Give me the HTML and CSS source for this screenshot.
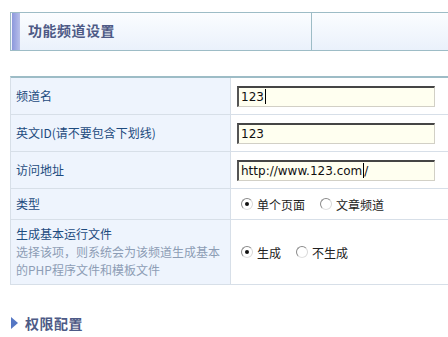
FILE: index.html
```html
<!DOCTYPE html>
<html lang="zh">
<head>
<meta charset="utf-8">
<link rel="stylesheet" href="styles.css">
</head>
<body>
<div class="page">
  <div class="titlebox">
    <div class="titlemain"><span class="accent"></span><span class="titletext">功能频道设置</span></div>
    <div class="titleside"></div>
  </div>

  <div class="form">
    <div class="lab">频道名</div>
    <div class="val"><div class="field">123<span class="caret"></span></div></div>

    <div class="lab">英文ID(请不要包含下划线)</div>
    <div class="val"><div class="field">123</div></div>

    <div class="lab">访问地址</div>
    <div class="val"><div class="field">http://www.123.com<span class="caret"></span>/</div></div>

    <div class="lab short">类型</div>
    <div class="val short">
      <span class="opt"><span class="radio on"></span>单个页面</span>
      <span class="opt"><span class="radio"></span>文章频道</span>
    </div>

    <div class="lab tall">
      <div>生成基本运行文件</div>
      <div class="desc">选择该项，则系统会为该频道生成基本的PHP程序文件和模板文件</div>
    </div>
    <div class="val tall">
      <span class="opt"><span class="radio on"></span>生成</span>
      <span class="opt"><span class="radio"></span>不生成</span>
    </div>
  </div>

  <div class="section"><span class="tri"></span><span class="sectext">权限配置</span></div>
</div>
</body>
</html>
```

FILE: styles.css
```css
html, body {
  margin: 0;
  padding: 0;
  background: #ffffff;
}
body {
  font-family: "Noto Sans CJK SC", "Liberation Sans", sans-serif;
  font-size: 12px;
}
.page {
  padding: 12px 0 0 10px;
}
.titlebox {
  display: flex;
  height: 37px;
  border: 1px solid #9dbcc6;
  border-right: none;
  background: linear-gradient(#fbfdff, #eaf1fb);
}
.titlemain {
  width: 300px;
  display: flex;
  align-items: center;
  border-right: 1px solid #9dbcc6;
}
.accent {
  width: 8px;
  height: 37px;
  margin-left: 1px;
  background: linear-gradient(90deg, #8c98dc, #b7bfea);
}
.titletext {
  margin-left: 8px;
  padding-bottom: 3px;
  font-size: 14px;
  font-weight: bold;
  color: #4d5a86;
  letter-spacing: 0.5px;
}
.titleside {
  flex: 1;
}
.form {
  margin-top: 25px;
  display: grid;
  grid-template-columns: 220px 1fr;
  border-top: 2px solid #9dbcc6;
  border-left: 1px solid #d7dfe8;
}
.lab {
  background: #eef4fd;
  color: #1d4b7e;
  border-right: 1px solid #d7dfe8;
  border-bottom: 1px solid #d7dfe8;
  height: 36px;
  padding-left: 5px;
  display: flex;
  flex-direction: column;
  justify-content: center;
  line-height: 18px;
  box-sizing: content-box;
}
.lab.short, .val.short { height: 30px; }
.lab.tall, .val.tall { height: 64px; }
.desc {
  color: #8d9db5;
  width: 210px;
}
.val {
  border-bottom: 1px solid #d7dfe8;
  height: 36px;
  padding-left: 6px;
  display: flex;
  align-items: center;
}
.field {
  width: 193px;
  height: 18px;
  background: #fffff0;
  border-top: 2px solid #454545;
  border-left: 2px solid #555555;
  border-right: 1px solid #d2d0c6;
  border-bottom: 1px solid #d2d0c6;
  font-family: "DejaVu Sans", Verdana, sans-serif;
  font-size: 12px;
  line-height: 18px;
  padding-left: 2px;
  color: #111;
  display: flex;
  align-items: center;
}
.caret {
  display: inline-block;
  width: 1px;
  height: 15px;
  background: #000;
  margin-left: 1px;
}
.opt {
  display: inline-flex;
  align-items: center;
  color: #222;
  margin-right: 15px;
}
.radio {
  width: 10px;
  height: 10px;
  border-radius: 50%;
  border: 1px solid #8a8a8a;
  border-bottom-color: #e0e0e0;
  border-right-color: #d8d8d8;
  background: #fff;
  margin: 0 4px 0 4px;
  position: relative;
  box-sizing: content-box;
}
.radio.on::after {
  content: "";
  position: absolute;
  left: 3px;
  top: 3px;
  width: 4px;
  height: 4px;
  border-radius: 50%;
  background: #111;
}
.val .opt + .opt .radio { margin-left: 0; }
.section {
  display: flex;
  align-items: center;
  margin-top: 28px;
}
.tri {
  width: 0;
  height: 0;
  border-top: 6px solid transparent;
  border-bottom: 6px solid transparent;
  border-left: 7px solid #5577c4;
  margin-left: 1px;
}
.sectext {
  margin-left: 7px;
  font-size: 14px;
  font-weight: bold;
  color: #4d5a86;
  letter-spacing: 0.5px;
}
```
